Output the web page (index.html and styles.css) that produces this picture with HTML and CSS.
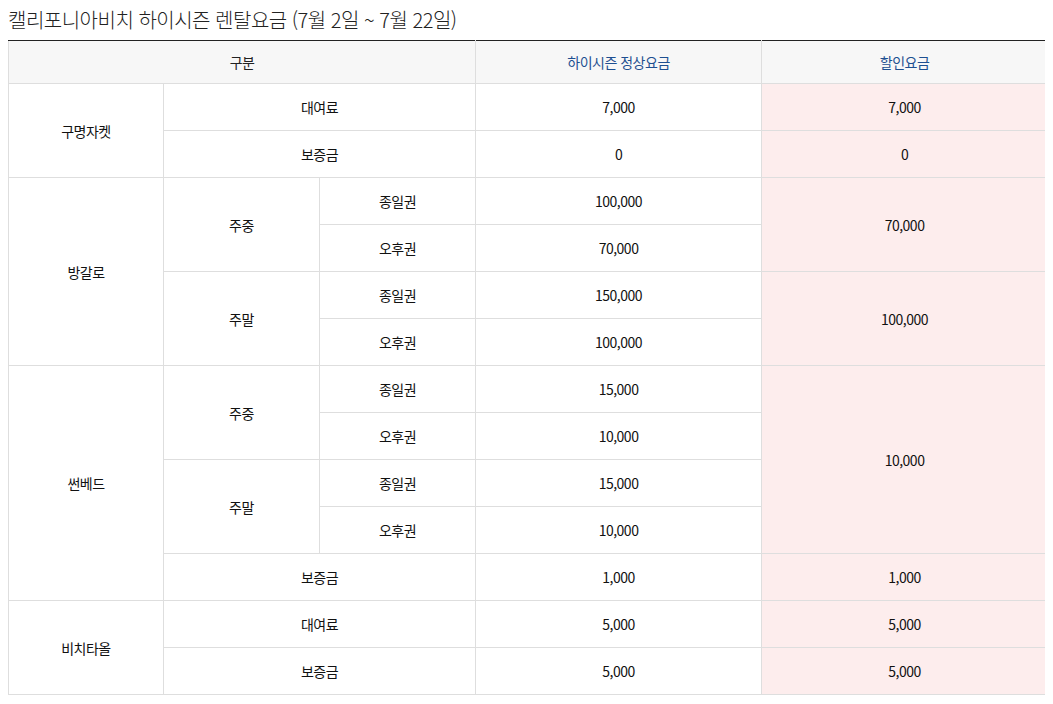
FILE: index.html
```html
<!DOCTYPE html>
<html lang="ko">
<head>
<meta charset="utf-8">
<link rel="stylesheet" href="styles.css">
</head>
<body>
<h2 class="title">캘리포니아비치 하이시즌 렌탈요금 (7월 2일 ~ 7월 22일)</h2>
<table class="rate">
  <colgroup>
    <col class="c1"><col class="c2"><col class="c3"><col class="c4"><col class="c5">
  </colgroup>
  <thead>
    <tr>
      <th colspan="3">구분</th>
      <th class="blue">하이시즌 정상요금</th>
      <th class="blue">할인요금</th>
    </tr>
  </thead>
  <tbody>
    <tr><td rowspan="2">구명자켓</td><td colspan="2">대여료</td><td>7,000</td><td class="sale">7,000</td></tr>
    <tr><td colspan="2">보증금</td><td>0</td><td class="sale">0</td></tr>

    <tr><td rowspan="4">방갈로</td><td rowspan="2">주중</td><td>종일권</td><td>100,000</td><td class="sale" rowspan="2">70,000</td></tr>
    <tr><td>오후권</td><td>70,000</td></tr>
    <tr><td rowspan="2">주말</td><td>종일권</td><td>150,000</td><td class="sale" rowspan="2">100,000</td></tr>
    <tr><td>오후권</td><td>100,000</td></tr>

    <tr><td rowspan="5">썬베드</td><td rowspan="2">주중</td><td>종일권</td><td>15,000</td><td class="sale" rowspan="4">10,000</td></tr>
    <tr><td>오후권</td><td>10,000</td></tr>
    <tr><td rowspan="2">주말</td><td>종일권</td><td>15,000</td></tr>
    <tr><td>오후권</td><td>10,000</td></tr>
    <tr><td colspan="2">보증금</td><td>1,000</td><td class="sale">1,000</td></tr>

    <tr><td rowspan="2">비치타올</td><td colspan="2">대여료</td><td>5,000</td><td class="sale">5,000</td></tr>
    <tr><td colspan="2">보증금</td><td>5,000</td><td class="sale">5,000</td></tr>
  </tbody>
</table>
</body>
</html>
```

FILE: styles.css
```css
body {
  margin: 8px;
  background: #fff;
  font-family: "Noto Sans CJK KR", "Noto Sans", sans-serif;
  color: #222;
}
.title {
  margin: 0 0 8px 0;
  font-size: 20px;
  line-height: 24px;
  font-weight: 300;
  letter-spacing: -0.5px;
  color: #222;
}
.rate {
  width: 1039px;
  border-collapse: collapse;
  table-layout: fixed;
  border-top: 1px solid #222;
  font-size: 14px;
  letter-spacing: -0.5px;
}
.c1 { width: 155px; }
.c2 { width: 156px; }
.c3 { width: 156px; }
.c4 { width: 286px; }
.c5 { width: 286px; }
.rate th, .rate td {
  border: 1px solid #dedede;
  padding: 0;
  text-align: center;
  vertical-align: middle;
  font-weight: 400;
}
.rate th {
  height: 42px;
  background: #f7f7f7;
  color: #222;
  border-top: 1px solid #222;
}
.rate th.blue { color: #1d4f91; }
.rate td {
  height: 46px;
  color: #111;
}
.rate td.sale { background: #fdeded; }
```
